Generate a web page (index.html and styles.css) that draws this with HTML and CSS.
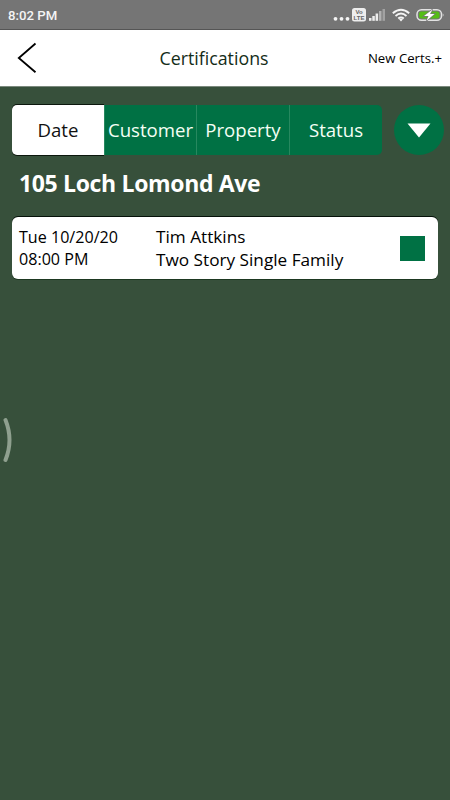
FILE: index.html
```html
<!DOCTYPE html>
<html lang="en">
<head>
    <meta charset="UTF-8">
    <meta name="viewport" content="width=device-width, initial-scale=1.0">
    <title>Certifications</title>
    <link rel="stylesheet" href="styles.css">
</head>
<body>
    <div class="status-bar">
        <span class="clock">8:02 PM</span>
        <svg class="status-icons" width="112" height="16" viewBox="0 0 112 16">
            <!-- notification dots -->
            <g fill="#f4f4f4">
                <circle cx="2.500" cy="11.800" r="1.900"/>
                <circle cx="8.500" cy="11.800" r="1.900"/>
                <circle cx="14.500" cy="11.800" r="1.900"/>
            </g>
            <!-- VoLTE -->
            <rect x="19" y="1" width="14" height="13.500" rx="2.500" fill="#eee"/>
            <text class="volte" x="26" y="7.300">Vo</text>
            <text class="volte" x="26" y="13.300">LTE</text>
            <!-- signal -->
            <g fill="#eee">
                <rect x="36" y="11" width="2.500" height="2.800"/>
                <rect x="39.300" y="9" width="2.500" height="4.800"/>
                <rect x="42.600" y="6.500" width="2.500" height="7.300"/>
                <rect x="46" y="4" width="2.500" height="9.800" fill="#b2b2b2"/>
                <rect x="49.500" y="2" width="2.500" height="11.800" fill="#a2a2a2"/>
            </g>
            <!-- wifi -->
            <g fill="none" stroke="#f4f4f4" stroke-width="1.900">
                <path d="M59.800 6.200q8.200-7 16.400 0"/>
                <path d="M62.500 8.900q5.500-4.600 11 0"/>
                <path d="M65.200 11.500q2.800-2.200 5.600 0"/>
            </g>
            <path d="M66 12.300q2-1.200 4 0l-2 2.200z" fill="#f4f4f4"/>
            <!-- battery -->
            <rect x="84" y="2.700" width="24.500" height="10.600" rx="4.500" fill="none" stroke="#e2e2e2" stroke-width="1.500"/>
            <path d="M109.800 6q1.600 2 0 4z" fill="#e2e2e2"/>
            <rect x="86" y="4.600" width="20.500" height="6.800" rx="2.500" fill="#54bd16"/>
            <path d="M99.500 2.500 91 9h4.500l-2 4.700 8-6.700h-4.500z" fill="#fff" stroke="#777" stroke-width="1.400" paint-order="stroke"/>
        </svg>
    </div>

    <header class="header">
        <svg class="back" width="20" height="32" viewBox="0 0 20 32">
            <path d="M18.500 1.500 1.800 16 18.500 30.300" fill="none" stroke="#000" stroke-width="1.800"/>
        </svg>
        <h1>Certifications</h1>
        <a class="new-certs">New Certs.+</a>
    </header>

    <main>
        <div class="filters">
            <div class="tabs">
                <div class="tab active">Date</div>
                <div class="tab">Customer</div>
                <div class="tab">Property</div>
                <div class="tab">Status</div>
            </div>
            <div class="sort">
                <svg width="24" height="15" viewBox="0 0 24 15">
                    <path d="M.5.5h23L12 14.500z" fill="#fff"/>
                </svg>
            </div>
        </div>

        <h2>105 Loch Lomond Ave</h2>

        <div class="card">
            <div class="when">
                <div>Tue 10/20/20</div>
                <div>08:00 PM</div>
            </div>
            <div class="who">
                <div>Tim Attkins</div>
                <div>Two Story Single Family</div>
            </div>
            <div class="state"></div>
        </div>
    </main>

    <svg class="edge-handle" width="12" height="46" viewBox="0 0 12 46">
        <path d="M2.500 3Q10.500 23 2.500 43" fill="none" stroke="#8fa08f" stroke-width="4" stroke-linecap="round"/>
    </svg>
</body>
</html>
```
FILE: styles.css
```css
* {
    box-sizing: border-box;
}
body {
    margin: 0;
    min-height: 800px;
    background: #37503b;
    font-family: "Open Sans", sans-serif;
    color: #000;
}
.status-bar {
    display: flex;
    justify-content: space-between;
    height: 30px;
    padding: 7px 5px 0 8px;
    background: #757575;
    border-bottom: 1px solid #555;
}
.clock {
    font: 500 13.2px/17px Roboto, sans-serif;
    color: #f4f4f4;
}
.volte {
    font: bold 6px "Liberation Sans", sans-serif;
    fill: #666;
    text-anchor: middle;
}
.header {
    display: grid;
    grid-template-columns: 92px 1fr 92px;
    align-items: center;
    height: 57px;
    padding: 0 8px 0 17px;
    background: #fff;
    border-bottom: 1px solid #7b897d;
}
h1 {
    margin: 0 31px 0 0;
    font-size: 17.8px;
    font-weight: 400;
    text-align: center;
    color: #142c18;
}
.new-certs {
    justify-self: end;
    font-size: 13.2px;
    white-space: nowrap;
}
main {
    padding: 18px 6px 0 12px;
}
.filters {
    display: flex;
    justify-content: space-between;
}
.tabs {
    display: grid;
    grid-template-columns: 92px 92px 93px 93px;
    width: 370px;
    height: 50px;
    border-radius: 5px;
    background: #007144;
}
.tab {
    border-left: 1px solid #27885f;
    font-size: 18.6px;
    line-height: 50px;
    text-align: center;
    color: #f4fff4;
}
.tab.active {
    border: 0;
    border-radius: 5px 0 0 5px;
    background: #fff;
    box-shadow: 0 -1px #0c170d, 0 1px #0c170d;
    color: #111;
}
.sort {
    display: flex;
    align-items: center;
    justify-content: center;
    width: 50px;
    height: 50px;
    border-radius: 50%;
    background: #007144;
}
h2 {
    margin: 13px 0 0 7px;
    font-size: 23px;
    letter-spacing: -0.34px;
    line-height: 31px;
    color: #fff;
}
.card {
    display: flex;
    align-items: center;
    width: 426px;
    height: 62px;
    margin-top: 18px;
    padding: 0 13px 0 7px;
    background: #fff;
    border-radius: 6px;
    box-shadow: 0 -1px #06120a, 0 1px #1d3821;
}
.when {
    width: 137px;
    font-size: 16.1px;
    line-height: 22px;
}
.who {
    flex: 1;
    font-size: 17.2px;
    line-height: 23px;
}
.state {
    width: 25px;
    height: 25px;
    background: #007144;
}
.edge-handle {
    position: absolute;
    left: 3px;
    top: 417px;
}
```
